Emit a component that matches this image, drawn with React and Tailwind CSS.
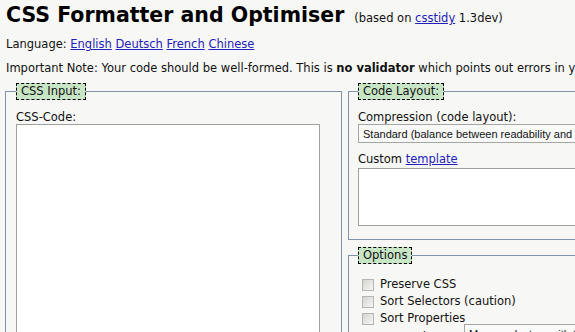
import React from "react";

function Legend({ children }) {
  return (
    <legend className="ml-0 border border-dashed border-black bg-[#c8e6c6] px-[4px] leading-[15px] text-[11.5px] text-[#111]">
      {children}
    </legend>
  );
}

function Check({ label }) {
  return (
    <div className="flex h-[17px] items-center">
      <span className="ml-[4px] mr-[6px] h-[12px] w-[12px] shrink-0 border border-[#b5b5b5] bg-gradient-to-br from-[#d4d4d0] to-[#f6f6f4]" />
      <span className="text-[11.5px] leading-[17px]">{label}</span>
    </div>
  );
}

export default function App() {
  return (
    <div className="h-[332px] w-[575px] overflow-hidden bg-[#f7f7f5] pl-[5px] font-['DejaVu_Sans',sans-serif] text-[11.5px] text-[#111]">
      <div className="ml-[1px] mt-[3px] flex items-baseline whitespace-nowrap">
        <h1 className="text-[20.5px] font-bold leading-[24px] text-black">CSS Formatter and Optimiser</h1>
        <span className="ml-[10px] text-[11.5px]">
          (based on <a className="text-[#2222bb] underline">csstidy</a> 1.3dev)
        </span>
      </div>
      <p className="ml-[1px] mt-[10px] leading-[14px]">
        Language: <a className="text-[#2222bb] underline">English</a>{" "}
        <a className="text-[#2222bb] underline">Deutsch</a>{" "}
        <a className="text-[#2222bb] underline">French</a>{" "}
        <a className="text-[#2222bb] underline">Chinese</a>
      </p>
      <p className="ml-[1px] mt-[10px] whitespace-nowrap leading-[14px]">
        Important Note: Your code should be well-formed. This is <b>no validator</b> which points out errors in your CSS code.
      </p>
      <div className="mt-[8px] flex gap-[6px]">
        <fieldset className="h-[300px] w-[337px] shrink-0 border border-[#8392ad] px-[10px]">
          <Legend>CSS Input:</Legend>
          <div className="mt-[10px] leading-[14px]">CSS-Code:</div>
          <textarea
            className="block h-[260px] w-[304px] resize-none border border-[#a0a0a0] bg-white"
            readOnly
          />
        </fieldset>
        <div className="flex w-[300px] shrink-0 flex-col">
          <fieldset className="border border-[#8392ad] px-[9px] pb-[13px]">
            <Legend>Code Layout:</Legend>
            <div className="mt-[10px] leading-[14px]">Compression (code layout):</div>
            <div className="flex h-[19px] w-[260px] items-center whitespace-nowrap border border-[#a5a5a5] bg-[#fafafa] pl-[4px] font-['Liberation_Sans',sans-serif] text-[11px]">
              Standard (balance between readability and size)
            </div>
            <div className="mt-[9px] leading-[14px]">
              Custom <a className="text-[#2222bb] underline">template</a>
            </div>
            <textarea
              className="mt-[2px] block h-[58px] w-[260px] resize-none border border-[#a0a0a0] bg-white"
              readOnly
            />
          </fieldset>
          <fieldset className="mt-[7px] border border-[#8392ad] px-[9px] pb-[10px]">
            <Legend>Options</Legend>
            <div className="mt-[12px]">
              <Check label="Preserve CSS" />
              <Check label="Sort Selectors (caution)" />
              <Check label="Sort Properties" />
              <div className="-mt-[3px] flex items-start whitespace-nowrap">
                <span className="mt-[5px] w-[106px] leading-[17px]">Regroup selectors:</span>
                <div className="flex h-[19px] w-[160px] items-center border border-[#a5a5a5] bg-[#fafafa] pl-[4px] font-['Liberation_Sans',sans-serif] text-[11px]">
                  Merge selectors with the same properties
                </div>
              </div>
            </div>
          </fieldset>
        </div>
      </div>
    </div>
  );
}
